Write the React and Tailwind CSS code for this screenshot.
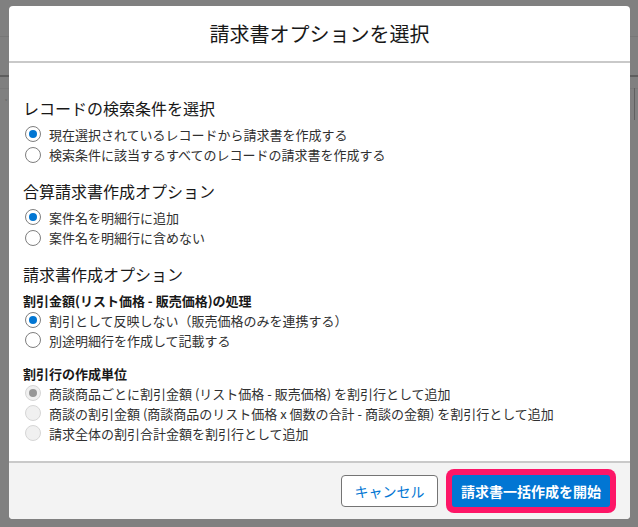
import React from "react";

const FONT = { fontFamily: '"Noto Sans CJK JP", "Noto Sans", sans-serif' };

function Radio({ checked, disabled, label, h = "h-[21px]" }) {
  return (
    <div className={`flex items-center ${h}`}>
      <span
        className={`ml-[2px] flex h-[16px] w-[16px] shrink-0 items-center justify-center rounded-full border ${
          disabled ? "border-[#d6d6d6] bg-[#f0f0f0]" : "border-[#7e7e7e] bg-white"
        }`}
      >
        {checked && (
          <span
            className={`h-[8px] w-[8px] rounded-full ${disabled ? "bg-[#979797]" : "bg-[#0176d3]"}`}
          />
        )}
      </span>
      <span className="ml-[8px] text-[13px] leading-none text-[#303030] whitespace-nowrap">{label}</span>
    </div>
  );
}

export default function App() {
  return (
    <div className="relative h-[527px] w-[638px] overflow-hidden bg-[#808080]" style={FONT}>
      {/* background page hints */}
      <div className="absolute left-0 top-[36px] h-px w-[638px] bg-[#777777]" />
      <div className="absolute left-0 top-[75px] h-[2px] w-[638px] bg-[#5e5e5e]" />
      <div className="absolute left-0 top-[88px] h-px w-[638px] bg-[#7a7a7a]" />
      <div className="absolute left-[634px] top-[88px] h-[32px] w-px bg-[#606060]" />
      <div className="absolute left-[5px] top-[99px] text-[8px] leading-none text-[#555]">˅</div>

      <div className="relative flex h-full flex-col pl-[9px] pr-[8px] pt-[6px] pb-[8px]">
        <div className="flex flex-1 flex-col overflow-hidden rounded-[4px] bg-white">
          {/* header */}
          <div className="flex h-[57px] shrink-0 items-center justify-center border-b-2 border-[#c9c9c9]">
            <h1 className="text-[20px] font-normal leading-none text-[#181818]">請求書オプションを選択</h1>
          </div>

          {/* body */}
          <div className="flex flex-1 flex-col px-[14px] pt-[33px]">
            <h2 className="text-[16px] leading-[24px] text-[#181818]">レコードの検索条件を選択</h2>
            <div className="mt-[4px]">
              <Radio checked h="h-[20.5px]" label="現在選択されているレコードから請求書を作成する" />
              <Radio h="h-[20.5px]" label="検索条件に該当するすべてのレコードの請求書を作成する" />
            </div>

            <h2 className="mt-[14px] text-[16px] leading-[24px] text-[#181818]">合算請求書作成オプション</h2>
            <div className="mt-[4px]">
              <Radio checked h="h-[20.5px]" label="案件名を明細行に追加" />
              <Radio h="h-[20.5px]" label="案件名を明細行に含めない" />
            </div>

            <h2 className="mt-[14px] text-[16px] leading-[24px] text-[#181818]">請求書作成オプション</h2>
            <div className="mt-[5px] text-[13px] font-bold leading-[20px] text-[#181818]">
              割引金額(リスト価格 - 販売価格)の処理
            </div>
            <div className="-mt-px">
              <Radio checked h="h-[20px]" label="割引として反映しない（販売価格のみを連携する）" />
              <Radio h="h-[20px]" label="別途明細行を作成して記載する" />
            </div>

            <div className="mt-[14px] text-[13px] font-bold leading-[20px] text-[#181818]">割引行の作成単位</div>
            <div className="-mt-px">
              <Radio disabled checked h="h-[20px]" label="商談商品ごとに割引金額 (リスト価格 - 販売価格) を割引行として追加" />
              <Radio disabled h="h-[20px]" label="商談の割引金額 (商談商品のリスト価格 x 個数の合計 - 商談の金額) を割引行として追加" />
              <Radio disabled h="h-[20px]" label="請求全体の割引合計金額を割引行として追加" />
            </div>
          </div>

          {/* footer */}
          <div className="flex h-[58px] shrink-0 items-center justify-end gap-[8px] border-t-2 border-[#c9c9c9] bg-[#f3f3f3] pr-[14px]">
            <button className="flex h-[32px] w-[97px] items-center justify-center rounded-[4px] border border-[#747474] bg-white text-[14px] text-[#0176d3]">
              キャンセル
            </button>
            <div className="rounded-[8px] bg-[#fd1667] p-[6px]">
              <button className="flex h-[32px] w-[158px] items-center justify-center rounded-[3px] bg-[#0176d3] text-[14px] font-bold text-white">
                請求書一括作成を開始
              </button>
            </div>
          </div>
        </div>
      </div>
    </div>
  );
}
